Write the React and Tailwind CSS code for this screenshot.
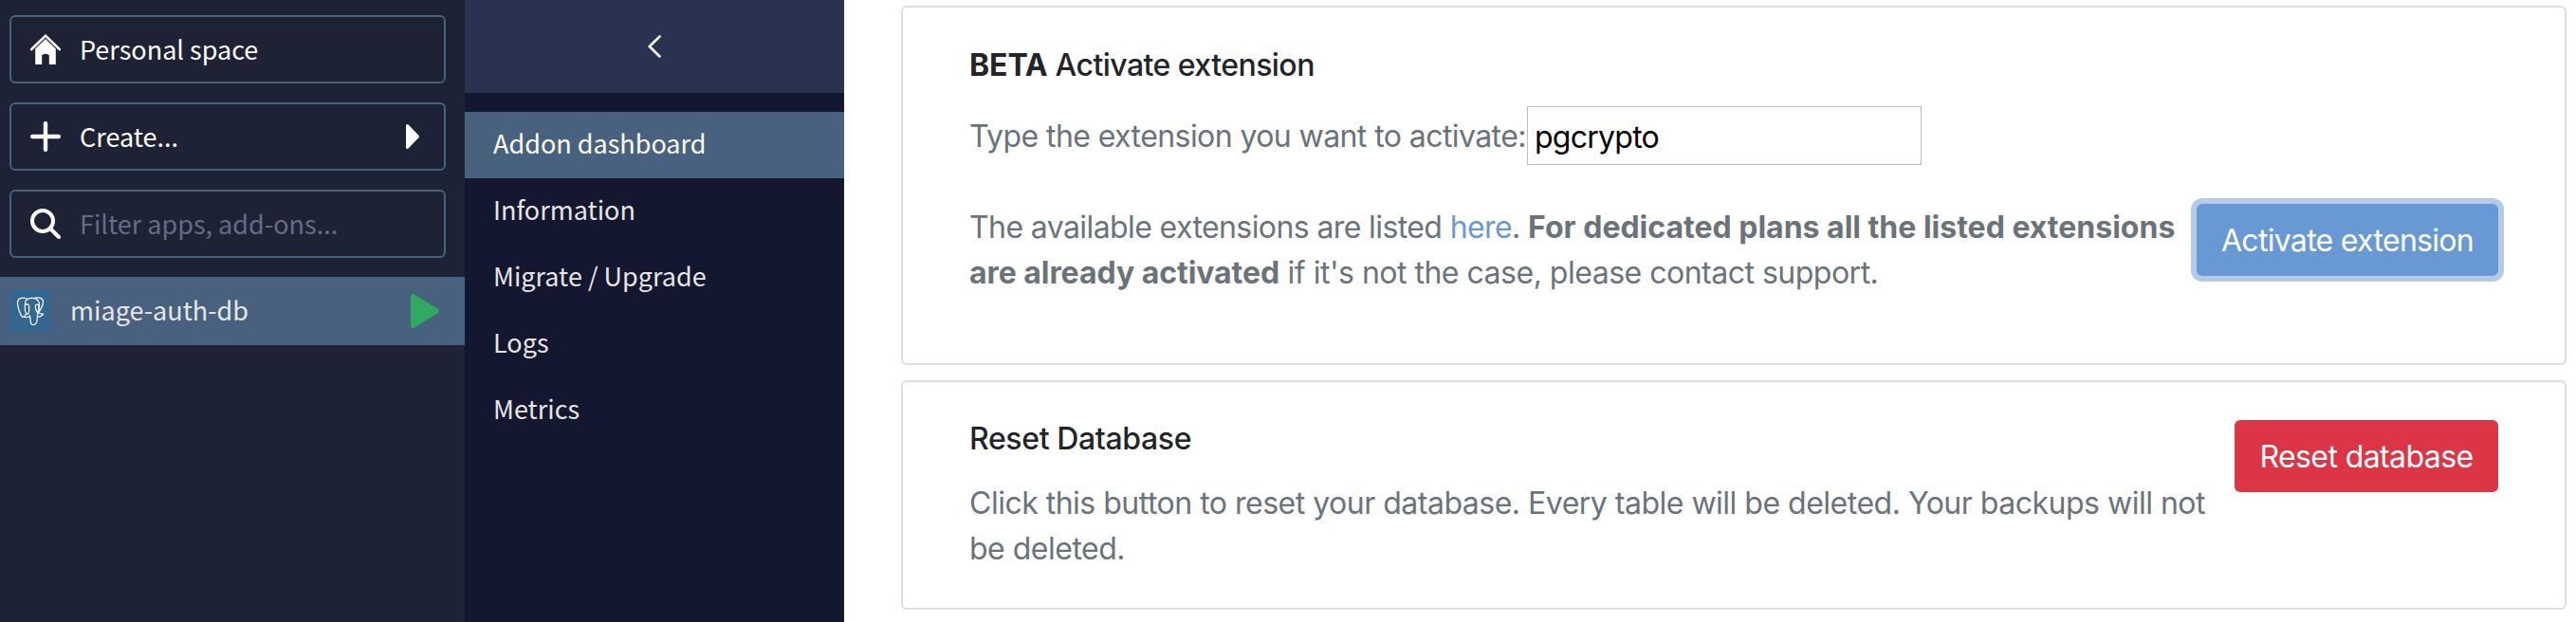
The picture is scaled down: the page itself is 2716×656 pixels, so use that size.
const boxClass = "flex h-[72px] items-center rounded-[6px] border-2 border-[#47617f] pl-5";
const navItems = ["Information", "Migrate / Upgrade", "Logs", "Metrics"];

function HomeIcon() {
  return (
    <svg width="32" height="32" viewBox="0 0 32 32" fill="none">
      <path d="M1 16.2 16 1.6 31 16.2" stroke="#fff" strokeWidth="2.6" strokeLinecap="round" strokeLinejoin="round" />
      <path d="M16 5 5.2 15.6V32h7V22.6q0-1 .9-1.2l2.9-.6 2.9.6q.9.2.9 1.2V32h7V15.6z" fill="#fff" />
    </svg>
  );
}

function PostgresIcon() {
  return (
    <svg width="44" height="44" viewBox="0 0 44 44" fill="none" stroke="#f3f7fa" strokeWidth="1.25" strokeLinecap="round" strokeLinejoin="round">
      <rect width="44" height="44" rx="5" fill="#336791" stroke="none" />
      <path d="M18 9C13 7 8.500 8.500 8.500 13.500c0 4 2.500 12 5 14.500 1.500 1.300 2.500-.5 4.500-3" />
      <path d="M16.500 14c.5-7 12-7.500 14.500-1.500 1.500 4 0 8-1.500 12" />
      <path d="M26 8.500c5-1.500 9.500 0 9.500 3.500 0 4-3 9-5 12 1.500 1.200 3.500 1 5 1-1 2.500-3.500 3-5.500 3" />
      <path d="M16.500 14c-.5 3-.5 5 0 8 .5 2.500 1.500 3.500 3 3 2-1.500 1-6 1-9-1-1.500-2.500-1.500-4-.5" />
      <path d="M16 28.500c2 .5 4 0 5.500-1.500.8 3 0 9 2.500 9.500 3 .5 4.500-1.500 5-4 .4-2.500.5-5 .5-7" />
      <path d="M27.500 16c1-1 2-1 3.500-.5-.3 3 .5 5-1 8.500-2-2-3-5-2.500-8z" />
    </svg>
  );
}

function Sidebar() {
  return (
    <aside className="flex w-[490px] shrink-0 flex-col bg-[#1d2235] text-[27px] leading-[40px] text-white">
      <div className="flex flex-col gap-5 pt-4 pr-5 pb-5 pl-[10px]">
        <div className={boxClass}>
          <HomeIcon />
          <span className="ml-5 pb-px">Personal space</span>
        </div>
        <div className={boxClass}>
          <svg width="32" height="32" viewBox="0 0 32 32">
            <path d="M16 2.200v27.600M2.200 16h27.600" stroke="#fff" strokeWidth="4.400" strokeLinecap="round" />
          </svg>
          <span className="ml-5 flex-1 pb-px">Create...</span>
          <svg width="16" height="28" viewBox="0 0 16 28" className="mr-[25px]">
            <path d="M2.500 2.500v23L13.500 14z" fill="#fff" stroke="#fff" strokeWidth="3" strokeLinejoin="round" />
          </svg>
        </div>
        <div className={boxClass}>
          <svg width="32" height="32" viewBox="0 0 32 32" fill="none">
            <circle cx="13" cy="13" r="11" stroke="#fff" strokeWidth="4" />
            <path d="M21 21l9 9" stroke="#fff" strokeWidth="4" strokeLinecap="round" />
          </svg>
          <span className="ml-5 pb-px text-[#656d86]">Filter apps, add-ons...</span>
        </div>
      </div>
      <div className="flex h-[72px] items-center bg-[#47617f] pl-[10px]">
        <PostgresIcon />
        <span className="ml-5 flex-1 pb-[3px] text-[#e6e6e6]">miage-auth-db</span>
        <svg width="30" height="36" viewBox="0 0 30 36" className="mr-[27px]">
          <path d="M2.500 2.500v31L27.500 18z" fill="#2faa60" stroke="#2faa60" strokeWidth="5" strokeLinejoin="round" />
        </svg>
      </div>
    </aside>
  );
}

function AddonNav() {
  return (
    <nav className="flex w-[400px] shrink-0 flex-col bg-[#13172f] text-[27px] leading-[40px] text-[#e6e6e6]">
      <div className="mb-5 flex h-[98px] items-center justify-center bg-[#293250]">
        <svg width="14" height="24" viewBox="0 0 14 24" fill="none">
          <path d="M12.500 1.500 1.800 12 12.500 22.500" stroke="#fff" strokeWidth="2.600" strokeLinecap="round" strokeLinejoin="round" />
        </svg>
      </div>
      <div className="flex h-[70px] items-center bg-[#47617f] pb-[4px] pl-[30px] text-white">Addon dashboard</div>
      {navItems.map((item) => (
        <div key={item} className="flex h-[70px] items-center pb-[4px] pl-[30px]">{item}</div>
      ))}
    </nav>
  );
}

export default function App() {
  return (
    <div className="flex h-[656px] w-[2716px] overflow-hidden bg-white font-['Noto_Sans_CJK_JP',sans-serif]">
      <Sidebar />
      <AddonNav />
      <main className="flex flex-1 flex-col gap-4 pt-[6px] pr-[10px] pl-[60px] font-[Inter,sans-serif] text-[32px] leading-[48px] font-normal tracking-[-0.5px] text-[#6a737c]">
        <section className="h-[379px] rounded-[6px] border-2 border-[#dedede] pt-[42px] pl-[70px]">
          <h2 className="font-medium leading-[38px] tracking-[-0.55px] whitespace-nowrap text-[#212529]"><b className="font-bold tracking-[-0.1px]">BETA</b> Activate extension</h2>
          <div className="mt-[24px] flex items-center">
            <span className="w-[588px] pt-[2px] tracking-[-0.58px] whitespace-nowrap">Type the extension you want to activate:</span>
            <input defaultValue="pgcrypto" className="h-[62px] w-[416px] border border-[#bbbbbb] px-[7px] pt-[2px] tracking-[-0.75px] text-black outline-none" />
          </div>
          <div className="flex items-start pt-[41px]">
            <p className="w-[1294px] pt-px whitespace-nowrap">
              <span className="tracking-[-0.6px]">The available extensions are listed <a className="text-[#6899d4]">here</a>. </span>
              <b className="tracking-normal">For dedicated plans all the listed extensions</b>
              <br />
              <b className="tracking-[-0.05px]">are already activated</b> if it's not the case, please contact support.
            </p>
            <button className="h-[76px] w-[318px] rounded-[6px] bg-[#6899d4] pt-[2px] tracking-[-0.7px] whitespace-nowrap text-white shadow-[0_0_0_6px_#b3caea]">Activate extension</button>
          </div>
        </section>
        <section className="flex h-[242px] items-start rounded-[6px] border-2 border-[#dedede] pt-10 pl-[70px]">
          <div className="w-[1334px] whitespace-nowrap">
            <h2 className="pt-px font-medium leading-[38px] tracking-[-0.37px] text-[#212529]">Reset Database</h2>
            <p className="mt-[25px]">
              Click this button to reset your database. Every table will be deleted. Your backups will not
              <br />
              be deleted.
            </p>
          </div>
          <button className="h-[76px] w-[278px] rounded-[6px] bg-[#dc3545] pt-[2px] tracking-[-0.6px] whitespace-nowrap text-white">Reset database</button>
        </section>
      </main>
    </div>
  );
}
